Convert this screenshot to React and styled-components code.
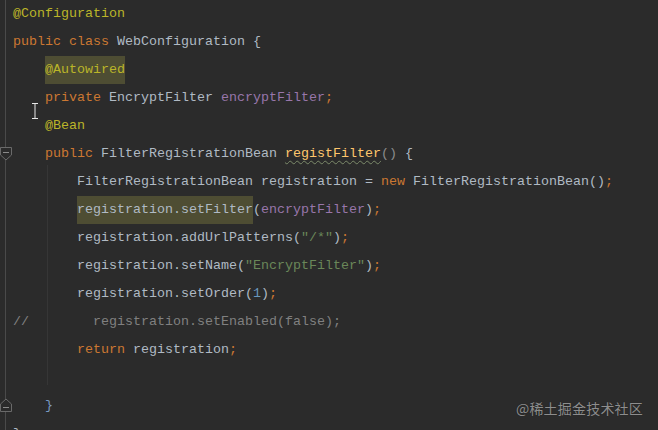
import React from "react";
import styled, { createGlobalStyle, css } from "styled-components";

const Global = createGlobalStyle`
  html, body { margin: 0; padding: 0; background: #2b2b2b; }
  body { width: 658px; height: 430px; overflow: hidden; }
`;

const Editor = styled.div`
  position: relative;
  display: flex;
  width: 658px;
  height: 430px;
  background: #2b2b2b;
  overflow: hidden;
`;

const Gutter = styled.div`
  position: relative;
  width: 13px;
  flex: 0 0 13px;
  &::before {
    content: "";
    position: absolute;
    left: 5px;
    top: 0;
    bottom: 0;
    width: 1px;
    background: #4a4a4a;
  }
`;

const FoldMark = styled.svg`
  position: absolute;
  left: 0;
  top: ${(p) => p.$top}px;
`;

const Code = styled.div`
  display: flex;
  flex-direction: column;
  font-family: "Liberation Mono", "DejaVu Sans Mono", monospace;
  font-size: 13.333px;
  color: #b0bac4;
`;

const Line = styled.div`
  height: 28px;
  line-height: 28px;
  white-space: pre;
`;

const colors = {
  ann: "#bbb529",
  kw: "#cc7832",
  field: "#9876aa",
  str: "#6a8759",
  num: "#6897bb",
  com: "#808080",
  fn: "#ffc66d",
  paren: "#8c8c8c",
  brace: "#7a9ac2",
};

const T = styled.span`
  color: ${(p) => colors[p.$k] || "#b0bac4"};
  ${(p) =>
    p.$wavy &&
    css`
      text-decoration: underline wavy #7c8a6a;
      text-decoration-thickness: 1px;
      text-underline-offset: 3px;
    `}
`;

const Mark = styled.span`
  display: inline-block;
  height: 28px;
  background: #4e4d33;
`;

const IndentGuide = styled.div`
  position: absolute;
  left: 47px;
  top: 165px;
  width: 1px;
  height: 220px;
  background: #363636;
`;

const Caret = styled.svg`
  position: absolute;
  left: 31px;
  top: 103px;
`;

const Watermark = styled.div`
  position: absolute;
  right: 15px;
  bottom: 12px;
  font-family: "Noto Sans CJK SC", "Noto Sans", sans-serif;
  font-size: 14px;
  color: #8d8d8d;
  text-shadow: 0 0 1px rgba(0, 0, 0, 0.4);
  letter-spacing: 0.2px;
`;

const I4 = "    ";
const I8 = "        ";

export default function App() {
  return (
    <>
      <Global />
      <Editor>
        <Gutter>
          <FoldMark $top={147} width="13" height="14" viewBox="0 0 13 14">
            <path d="M0.5 0.5 H11.5 V8 L6 13 L0.5 8 Z" fill="#2b2b2b" stroke="#6a6a6a" />
            <path d="M3 5.5 H9" stroke="#8a8a8a" />
          </FoldMark>
          <FoldMark $top={398} width="13" height="14" viewBox="0 0 13 14">
            <path d="M0.5 13.5 H11.5 V6 L6 1 L0.5 6 Z" fill="#2b2b2b" stroke="#6a6a6a" />
            <path d="M3 9.5 H9" stroke="#8a8a8a" />
          </FoldMark>
        </Gutter>
        <Code>
          <Line><T $k="ann">@Configuration</T></Line>
          <Line><T $k="kw">public class </T>WebConfiguration {"{"}</Line>
          <Line>{I4}<Mark><T $k="ann">@Autowired</T></Mark></Line>
          <Line>{I4}<T $k="kw">private </T>EncryptFilter <T $k="field">encryptFilter</T><T $k="kw">;</T></Line>
          <Line>{I4}<T $k="ann">@Bean</T></Line>
          <Line>{I4}<T $k="kw">public </T>FilterRegistrationBean <T $k="fn" $wavy>registFilter</T><T $k="paren">() </T>{"{"}</Line>
          <Line>{I8}FilterRegistrationBean registration = <T $k="kw">new </T>FilterRegistrationBean()<T $k="kw">;</T></Line>
          <Line>{I8}<Mark>registration.setFilter</Mark>(<T $k="field">encryptFilter</T>)<T $k="kw">;</T></Line>
          <Line>{I8}registration.addUrlPatterns(<T $k="str">"/*"</T>)<T $k="kw">;</T></Line>
          <Line>{I8}registration.setName(<T $k="str">"EncryptFilter"</T>)<T $k="kw">;</T></Line>
          <Line>{I8}registration.setOrder(<T $k="num">1</T>)<T $k="kw">;</T></Line>
          <Line><T $k="com">//        registration.setEnabled(false);</T></Line>
          <Line>{I8}<T $k="kw">return </T>registration<T $k="kw">;</T></Line>
          <Line> </Line>
          <Line>{I4}<T $k="brace">{"}"}</T></Line>
          <Line>{"}"}</Line>
        </Code>
        <IndentGuide />
        <Caret width="8" height="16" viewBox="0 0 8 16">
          <path d="M1 0.5 H7 M4 0.5 V15.5 M1 15.5 H7" stroke="#e8e8e8" strokeWidth="1" fill="none" />
        </Caret>
        <Watermark>@稀土掘金技术社区</Watermark>
      </Editor>
    </>
  );
}
